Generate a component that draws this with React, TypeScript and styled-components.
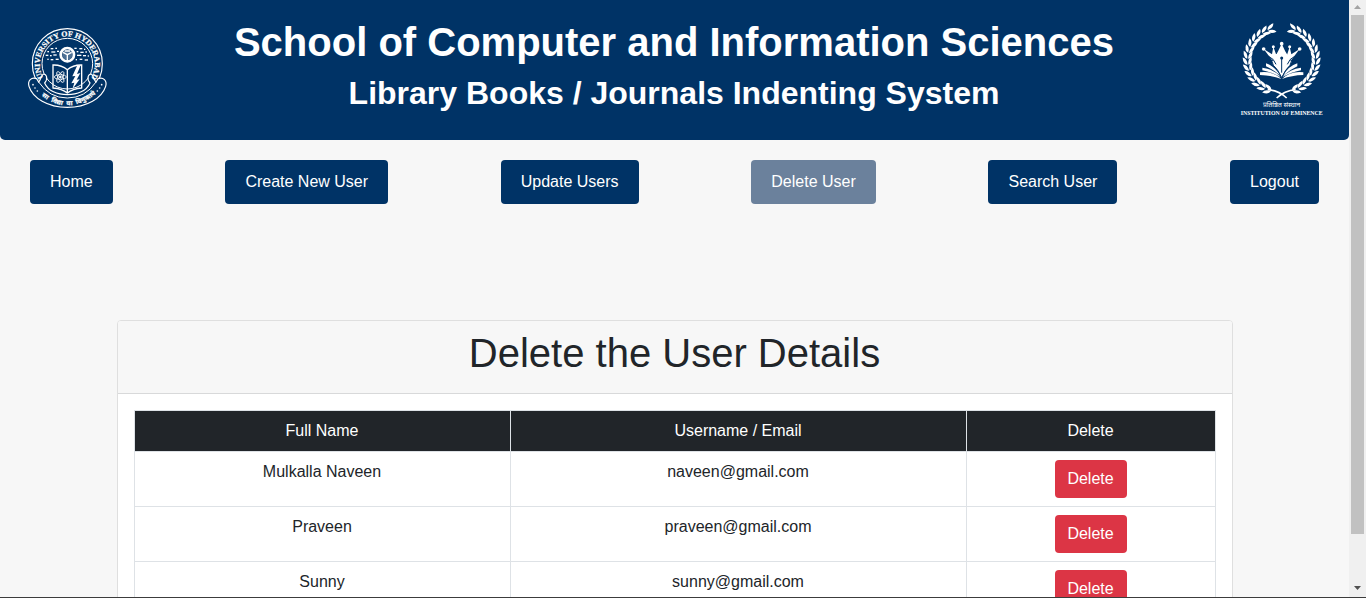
import React from 'react';
import styled, { createGlobalStyle } from 'styled-components';

const GlobalStyle = createGlobalStyle`
  *, *::before, *::after { box-sizing: border-box; }
  html, body { margin: 0; padding: 0; }
  body {
    font-family: "Liberation Sans", Arial, "Noto Sans", sans-serif;
    font-size: 16px;
    line-height: 1.5;
    color: #212529;
    overflow: hidden;
  }
`;

const Window = styled.div`
  display: grid;
  grid-template-columns: 1fr 17px;
  height: 598px;
  border-bottom: 1px solid #3c3c3c;
  overflow: hidden;
`;

const Page = styled.div`
  background: #f7f7f7;
  overflow: hidden;
  min-width: 0;
`;

const Header = styled.header`
  display: flex;
  justify-content: space-between;
  height: 140px;
  background: #003366;
  color: #fff;
  border-radius: 0 0 5px 5px;
`;

const Logo = styled.svg<{ $w: number; $h: number; $top: number; $left: number }>`
  flex: none;
  width: ${p => p.$w}px;
  height: ${p => p.$h}px;
  margin: ${p => p.$top}px 0 0 ${p => p.$left}px;
`;

const Titles = styled.div`
  flex: 1;
  text-align: center;
  white-space: nowrap;
  padding: 18px 2px 0 0;
`;

const SchoolName = styled.h1`
  margin: 0;
  font-size: 40px;
  line-height: 48px;
  font-weight: 700;
`;

const SystemName = styled.h2`
  margin: 8px 0 0;
  font-size: 32px;
  line-height: 38px;
  font-weight: 700;
`;

const Nav = styled.nav`
  display: flex;
  justify-content: space-between;
  padding: 20px 30px;
`;

const NavButton = styled.a<{ $active?: boolean }>`
  height: 44px;
  padding: 10px 20px;
  border-radius: 4px;
  line-height: 24px;
  color: #fff;
  background: ${p => (p.$active ? '#6b819c' : '#003366')};
`;

const Card = styled.section`
  width: 1116px;
  margin: 96px auto 0;
  border: 1px solid #dfdfdf;
  border-radius: 4px;
  background: #fff;
`;

const CardHeader = styled.div`
  height: 73px;
  padding: 8px 16px;
  border-bottom: 1px solid #d8d9da;
  border-radius: 3px 3px 0 0;
  background: #f7f7f7;
  text-align: center;
`;

const CardTitle = styled.h1`
  margin: 0;
  font-size: 40px;
  line-height: 48px;
  font-weight: 400;
`;

const CardBody = styled.div`
  padding: 16px;
`;

const Table = styled.table`
  width: 1082px;
  border-collapse: collapse;
  table-layout: fixed;
  text-align: center;
`;

const HeadCell = styled.th<{ $w: number }>`
  width: ${p => p.$w}px;
  padding: 8px;
  border: 1px solid #dee2e6;
  background: #212529;
  color: #fff;
  font-weight: 400;
`;

const Cell = styled.td`
  padding: 8px;
  border: 1px solid #dee2e6;
  vertical-align: top;
`;

const DeleteButton = styled.button`
  display: block;
  margin: 0 auto;
  width: 72px;
  height: 38px;
  padding: 0;
  border: 0;
  border-radius: 4px;
  background: #dc3545;
  color: #fff;
  font: inherit;
`;

const Scrollbar = styled.div`
  display: flex;
  flex-direction: column;
  align-items: center;
  background: #f0f0f0;
`;

const ScrollArrow = styled.svg`
  flex: none;
  width: 17px;
  height: 15px;
`;

const ScrollThumb = styled.div`
  width: 13px;
  height: 519px;
  background: #c1c1c1;
`;

const ScrollTrack = styled.div`
  flex: 1;
`;

const dots = [
  [122, 99, 8], [136, 98, 5], [112, 108, 5], [124, 109, 12], [141, 107, 6],
  [107, 119, 8], [120, 120, 5], [130, 118, 10], [112, 131, 4], [122, 132, 8], [137, 131, 9],
  [193, 98, 7], [208, 99, 9], [222, 101, 4], [200, 108, 5], [211, 110, 10], [226, 109, 5],
  [201, 119, 13], [219, 120, 9], [233, 121, 4], [197, 132, 4], [209, 131, 8], [224, 133, 10],
];

function UniversitySeal() {
  return (
    <Logo $w={120} $h={105} $top={15} $left={10} viewBox="0 0 360 315" fill="none" stroke="#fff">
      <defs>
        <path id="ring" d="M103 192 A82.5 82.5 0 1 1 241 192" />
        <path id="motto" d="M88 238 Q172 304 256 238" />
      </defs>
      <circle cx="172" cy="146" r="105" strokeWidth="3.5" />
      <circle cx="172" cy="146" r="76" strokeWidth="3" />
      <path fill="#003366" strokeWidth="3.5" d="M104 204 C116 190 108 174 99 178 C92 184 92 196 86 201 L80 191 C64 185 52 197 57 214 C68 249 113 277 172 277 C231 277 276 249 287 214 C292 197 280 185 264 191 L258 201 C252 196 252 184 245 178 C236 174 228 190 240 204 C230 228 202 239 172 239 C142 239 114 228 104 204Z" />
      <path strokeWidth="3" d="M86 201 Q118 249 172 249 Q226 249 258 201" />
      <text fill="#fff" stroke="#fff" strokeWidth=".7" fontFamily="Liberation Serif, serif" fontWeight="700" fontSize="23">
        <textPath href="#ring" startOffset="5" textLength="347" lengthAdjust="spacingAndGlyphs">UNIVERSITY OF HYDERABAD</textPath>
      </text>
      <g fill="#fff" stroke="none">
        <circle cx="69" cy="209" r="2.5" /><circle cx="75" cy="219" r="2.5" /><circle cx="82" cy="228" r="2.5" />
        <circle cx="275" cy="209" r="2.5" /><circle cx="269" cy="219" r="2.5" /><circle cx="262" cy="228" r="2.5" />
        {dots.map(([x, y, w]) => <rect key={`${x}-${y}`} x={x} y={y} width={w} height="4" />)}
      </g>
      <text fill="#fff" stroke="#fff" strokeWidth=".6" fontFamily="Noto Sans Devanagari, Noto Sans, sans-serif" fontWeight="700" fontSize="19" wordSpacing="7">
        <textPath href="#motto" startOffset="8" textLength="178" lengthAdjust="spacingAndGlyphs">सा विद्या या विमुक्तये</textPath>
      </text>
      <circle cx="172" cy="119" r="20" strokeWidth="8" />
      <circle cx="172" cy="119" r="15" fill="#fff" stroke="none" opacity=".3" />
      <path strokeWidth="4" d="M159 112 L172 119 L185 112 M172 119 V138 M164 108 H180" />
      <path strokeWidth="4" d="M172 164 Q154 149 129 150 V219 Q156 221 172 234 Q188 221 215 219 V150 Q190 149 172 164 V234" />
      <g strokeWidth="2.5">
        <ellipse cx="151" cy="186" rx="18" ry="7" />
        <ellipse cx="151" cy="186" rx="18" ry="7" transform="rotate(60 151 186)" />
        <ellipse cx="151" cy="186" rx="18" ry="7" transform="rotate(120 151 186)" />
        <circle cx="151" cy="186" r="3" fill="#fff" />
      </g>
      <path fill="#fff" stroke="none" d="M202 151 L187 184 L196 183 L184 205 L193 203 L187 223 L209 193 L200 194 L211 174 L201 177 L212 151Z" />
    </Logo>
  );
}

const leafSteps = Array.from({ length: 14 }, (_, i) => i);

function Branch() {
  return (
    <g fill="#fff" stroke="none">
      {leafSteps.map(i => {
        const deg = 111 + i * 10.6;
        const a = (deg * Math.PI) / 180;
        const x = 185 + 102 * Math.cos(a);
        const y = 150 + 97 * Math.sin(a);
        return (
          <g key={i} transform={`translate(${x} ${y}) rotate(${deg + 90})`}>
            <path d="M-5 -1 Q-3 -14 18 -14 Q14 -1 -5 -1Z" />
            <path d="M-5 1 Q-3 14 18 13 Q14 1 -5 1Z" />
          </g>
        );
      })}
    </g>
  );
}

function EminenceEmblem() {
  return (
    <Logo $w={129} $h={130} $top={10} $left={0} viewBox="0 0 387 390" fill="none" stroke="#fff">
      <Branch />
      <g transform="translate(370 0) scale(-1 1)"><Branch /></g>
      <path strokeWidth="5" d="M143 239 Q177 242 200 264 M227 239 Q193 242 170 264" />
      <g fill="#fff" stroke="none">
        <path d="M120 187 Q158 182 184 207 Q155 196 120 195Z M127 173 Q160 176 183 202 Q159 187 127 181Z M138 160 Q163 167 182 198 Q160 179 138 169Z" />
        <path d="M250 187 Q212 182 186 207 Q215 196 250 195Z M243 173 Q210 176 187 202 Q211 187 243 181Z M232 160 Q207 167 188 198 Q210 179 232 169Z" />
      </g>
      <path fill="#fff" stroke="#003366" strokeWidth="3" d="M160 141 Q152 156 160 166 Q174 178 185 203 Q196 178 210 166 Q218 156 210 141 L185 112Z" />
      <g fill="#fff" stroke="none">
        <circle cx="185" cy="101" r="5.5" /><circle cx="160" cy="110" r="4.5" /><circle cx="209" cy="110" r="4.5" />
        <circle cx="131" cy="117" r="5.5" /><circle cx="239" cy="117" r="5.5" />
        <path d="M131 117 L156 133 L160 110 L169 135 L185 101 L201 135 L209 110 L214 133 L239 117 L214 150 L202 142 L185 150 L168 142 L156 150Z" />
      </g>
      <path stroke="#003366" strokeWidth="3" d="M146 139 Q162 146 168 163 M224 139 Q208 146 202 163 M185 145 V188" />
      <circle cx="185" cy="144" r="4.5" fill="#003366" stroke="none" />
      <text x="185" y="292" textAnchor="middle" fill="#fff" stroke="none" fontFamily="Noto Sans Devanagari, Noto Sans, sans-serif" fontSize="20" textLength="112" lengthAdjust="spacingAndGlyphs">प्रतिष्ठित संस्थान</text>
      <text x="185" y="314" textAnchor="middle" fill="#fff" stroke="none" fontFamily="Liberation Serif, serif" fontWeight="700" fontSize="16" textLength="246" lengthAdjust="spacingAndGlyphs">INSTITUTION OF EMINENCE</text>
    </Logo>
  );
}

const navItems = ['Home', 'Create New User', 'Update Users', 'Delete User', 'Search User', 'Logout'];

const users = [
  { name: 'Mulkalla Naveen', email: 'naveen@gmail.com' },
  { name: 'Praveen', email: 'praveen@gmail.com' },
  { name: 'Sunny', email: 'sunny@gmail.com' },
];

export default function App() {
  return (
    <>
      <GlobalStyle />
      <Window>
        <Page>
          <Header>
            <UniversitySeal />
            <Titles>
              <SchoolName>School of Computer and Information Sciences</SchoolName>
              <SystemName>Library Books / Journals Indenting System</SystemName>
            </Titles>
            <EminenceEmblem />
          </Header>
          <Nav>
            {navItems.map(item => (
              <NavButton key={item} $active={item === 'Delete User'}>{item}</NavButton>
            ))}
          </Nav>
          <Card>
            <CardHeader>
              <CardTitle>Delete the User Details</CardTitle>
            </CardHeader>
            <CardBody>
              <Table>
                <thead>
                  <tr>
                    <HeadCell $w={376}>Full Name</HeadCell>
                    <HeadCell $w={456}>Username / Email</HeadCell>
                    <HeadCell $w={249}>Delete</HeadCell>
                  </tr>
                </thead>
                <tbody>
                  {users.map(user => (
                    <tr key={user.email}>
                      <Cell>{user.name}</Cell>
                      <Cell>{user.email}</Cell>
                      <Cell><DeleteButton>Delete</DeleteButton></Cell>
                    </tr>
                  ))}
                </tbody>
              </Table>
            </CardBody>
          </Card>
        </Page>
        <Scrollbar>
          <ScrollArrow viewBox="0 0 17 15"><path d="M5 9 L8.5 5 L12 9Z" fill="#a3a3a3" /></ScrollArrow>
          <ScrollThumb />
          <ScrollTrack />
          <ScrollArrow viewBox="0 0 17 15"><path d="M5 4 H12 L8.5 8Z" fill="#505050" /></ScrollArrow>
        </Scrollbar>
      </Window>
    </>
  );
}
